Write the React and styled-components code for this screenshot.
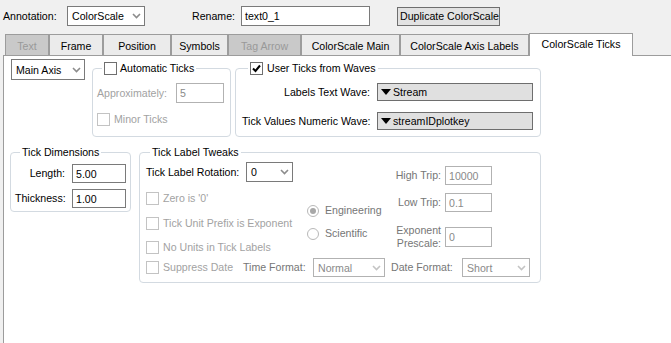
import React from "react";
import styled, { createGlobalStyle } from "styled-components";

const GlobalStyle = createGlobalStyle`
  html, body {
    margin: 0;
    padding: 0;
    background: #f0f0f0;
  }
  body {
    font-family: "Liberation Sans", Arial, sans-serif;
    font-size: 10.6px;
    color: #000;
  }
  * {
    box-sizing: border-box;
  }
`;

const Window = styled.div`
  width: 671px;
  height: 343px;
  display: flex;
  flex-direction: column;
  overflow: hidden;
  background: #f0f0f0;
`;

const TopBar = styled.div`
  display: flex;
  align-items: center;
  height: 20px;
  margin: 6px 0 0 3px;
`;

const Label = styled.span`
  display: inline-block;
  flex: none;
  width: ${(p) => (p.$w ? `${p.$w}px` : "auto")};
  margin-left: ${(p) => p.$ml || 0}px;
  text-align: ${(p) => (p.$right ? "right" : "left")};
  color: ${(p) => (p.$tone === "dim" ? "#a2a2a2" : p.$tone === "mid" ? "#767676" : "#000")};
  line-height: 13px;
  white-space: ${(p) => (p.$wrap ? "normal" : "nowrap")};
`;

const Field = styled.div`
  flex: none;
  width: ${(p) => p.$w}px;
  height: ${(p) => p.$h || 20}px;
  margin-left: ${(p) => p.$ml || 0}px;
  border: 1px solid ${(p) => (p.$off ? "#b2b2b2" : "#7a7a7a")};
  background: #fff;
  color: ${(p) => (p.$off ? "#8a8a8a" : "#000")};
  padding-left: 3px;
  display: flex;
  align-items: center;
`;

const SelectBox = styled(Field)`
  justify-content: space-between;
  padding: 0 3px 0 4px;
`;

const PopupBox = styled.div`
  flex: none;
  width: ${(p) => p.$w}px;
  height: 18px;
  margin-left: ${(p) => p.$ml || 0}px;
  background: #e0e0e0;
  border: 1px solid #6e6e6e;
  display: flex;
  align-items: center;
  gap: 2px;
  padding-left: 3px;
`;

const Button = styled.div`
  width: 103px;
  height: 19px;
  margin-left: 27px;
  background: #e2e2e2;
  border: 1px solid #6e6e6e;
  display: flex;
  align-items: center;
  padding-left: 2px;
  white-space: nowrap;
`;

const TabStrip = styled.div`
  display: flex;
  align-items: flex-end;
  height: 22px;
  margin-top: 7px;
  padding-left: 5px;
`;

const Tab = styled.div`
  flex: none;
  width: ${(p) => p.$w}px;
  height: ${(p) => (p.$active ? 23 : 21)}px;
  margin-bottom: ${(p) => (p.$active ? -1 : 0)}px;
  position: relative;
  z-index: ${(p) => (p.$active ? 1 : 0)};
  border: 1px solid #9c9c9c;
  border-bottom: none;
  background: ${(p) => (p.$active ? "#fff" : p.$off ? "#c9c9c9" : "#ebebeb")};
  color: ${(p) => (p.$off ? "#999" : "#000")};
  display: flex;
  align-items: center;
  justify-content: center;
  white-space: nowrap;
  padding-top: ${(p) => (p.$active ? 0 : 1)}px;
  padding-bottom: ${(p) => (p.$active ? 3 : 0)}px;
`;

const Panel = styled.div`
  flex: 1;
  margin-left: 3px;
  background: #fff;
  border-top: 1px solid #9c9c9c;
  border-left: 1px solid #9c9c9c;
  padding: 3px 0 0 7px;
`;

const Row = styled.div`
  display: flex;
  align-items: flex-start;
  margin-top: ${(p) => p.$mt || 0}px;
  margin-left: ${(p) => p.$ml || 0}px;
`;

const Group = styled.fieldset`
  flex: none;
  width: ${(p) => p.$w}px;
  margin: ${(p) => p.$mt || 0}px 0 0 ${(p) => p.$ml || 0}px;
  padding: ${(p) => p.$pad};
  border: 1px solid #d3dae1;
  border-radius: 4px;
  min-width: 0;
`;

const Legend = styled.legend`
  margin-left: ${(p) => p.$ml}px;
  padding: 0 2px;
  line-height: 13px;
  height: 13px;
`;

const LegendInner = styled.span`
  display: inline-flex;
  align-items: center;
  gap: ${(p) => p.$gap || 3}px;
`;

const Line = styled.div`
  display: flex;
  align-items: ${(p) => (p.$top ? "flex-start" : "center")};
  margin-top: ${(p) => p.$mt || 0}px;
`;

const Col = styled.div`
  flex: none;
  width: ${(p) => (p.$w ? `${p.$w}px` : "auto")};
  display: flex;
  flex-direction: column;
`;

const CheckItem = styled.div`
  flex: none;
  display: flex;
  align-items: center;
  gap: ${(p) => p.$gap || 4}px;
  width: ${(p) => (p.$w ? `${p.$w}px` : "auto")};
  height: 13px;
  margin-top: ${(p) => p.$mt || 0}px;
`;

const Box = styled.span`
  flex: none;
  width: 13px;
  height: 13px;
  border: 1px solid ${(p) => (p.$off ? "#c3c3c3" : "#6f6f6f")};
  background: #fff;
  display: flex;
  align-items: center;
  justify-content: center;
`;

const RadioDot = styled.span`
  flex: none;
  width: 12px;
  height: 12px;
  border-radius: 50%;
  border: 1px solid #b8b8b8;
  background: #fff;
  display: flex;
  align-items: center;
  justify-content: center;
  &::after {
    content: "";
    display: ${(p) => (p.$on ? "block" : "none")};
    width: 6px;
    height: 6px;
    border-radius: 50%;
    background: #a8a8a8;
  }
`;

const RadioItem = styled.div`
  display: flex;
  align-items: center;
  gap: 6px;
  height: 13px;
  margin-top: ${(p) => p.$mt || 0}px;
`;

function Chevron({ off }) {
  return (
    <svg width="9" height="6" viewBox="0 0 9 6">
      <polyline
        points="1,1 4.5,4.5 8,1"
        fill="none"
        stroke={off ? "#c4c4c4" : "#8c8c8c"}
        strokeWidth="1.6"
      />
    </svg>
  );
}

function Select({ w, h, ml, off, children }) {
  return (
    <SelectBox $w={w} $h={h} $ml={ml} $off={off}>
      <span>{children}</span>
      <Chevron off={off} />
    </SelectBox>
  );
}

function Popup({ w, ml, children }) {
  return (
    <PopupBox $w={w} $ml={ml}>
      <svg width="10" height="6" viewBox="0 0 10 6">
        <polygon points="0,0 10,0 5,6" fill="#000" />
      </svg>
      <span>{children}</span>
    </PopupBox>
  );
}

function Check({ on, off }) {
  return (
    <Box $off={off}>
      {on && (
        <svg width="9" height="9" viewBox="0 0 9 9">
          <polyline points="1,4.5 3.5,7 8,1.5" fill="none" stroke="#000" strokeWidth="2" />
        </svg>
      )}
    </Box>
  );
}

function CheckLabel({ children, off, on, w, mt }) {
  return (
    <CheckItem $w={w} $mt={mt}>
      <Check on={on} off={off} />
      <Label $tone={off ? "dim" : undefined}>{children}</Label>
    </CheckItem>
  );
}

const tabs = [
  { name: "Text", w: 44, off: true },
  { name: "Frame", w: 54 },
  { name: "Position", w: 68 },
  { name: "Symbols", w: 57 },
  { name: "Tag Arrow", w: 73, off: true },
  { name: "ColorScale Main", w: 99 },
  { name: "ColorScale Axis Labels", w: 129 },
  { name: "ColorScale Ticks", w: 104, active: true },
];

export default function App() {
  return (
    <Window>
      <GlobalStyle />
      <TopBar>
        <Label $w={64}>Annotation:</Label>
        <Select w={78} h={20}>ColorScale</Select>
        <Label $w={49} $ml={47}>Rename:</Label>
        <Field $w={129} $h={20}>text0_1</Field>
        <Button>Duplicate ColorScale</Button>
      </TopBar>

      <TabStrip>
        {tabs.map((t) => (
          <Tab key={t.name} $w={t.w} $off={t.off} $active={t.active}>
            {t.name}
          </Tab>
        ))}
      </TabStrip>

      <Panel>
        <Row>
          <Select w={74} h={21}>Main Axis</Select>

          <Group $w={139} $ml={7} $mt={3} $pad="8px 0 10px 4px">
            <Legend $ml={5}>
              <LegendInner $gap={3}>
                <Check />
                <span>Automatic Ticks</span>
              </LegendInner>
            </Legend>
            <Line>
              <Label $w={79} $tone="dim">Approximately:</Label>
              <Field $w={48} $h={20} $off>5</Field>
            </Line>
            <CheckLabel off mt={10}>Minor Ticks</CheckLabel>
          </Group>

          <Group $w={306} $ml={4} $mt={3} $pad="8px 0 6px 6px">
            <Legend $ml={6}>
              <LegendInner $gap={4}>
                <Check on />
                <span>User Ticks from Waves</span>
              </LegendInner>
            </Legend>
            <Line>
              <Label $w={128} $right>Labels Text Wave:</Label>
              <Popup w={156} ml={7}>Stream</Popup>
            </Line>
            <Line $mt={11}>
              <Label $w={128} $right>Tick Values Numeric Wave:</Label>
              <Popup w={156} ml={7}>streamIDplotkey</Popup>
            </Line>
          </Group>
        </Row>

        <Row $mt={9} $ml={-1}>
          <Group $w={121} $pad="5px 0 3px 4px">
            <Legend $ml={5}>Tick Dimensions</Legend>
            <Line>
              <Label $w={50} $right>Length:</Label>
              <Field $w={54} $h={19} $ml={7}>5.00</Field>
            </Line>
            <Line $mt={6}>
              <Label $w={50} $right>Thickness:</Label>
              <Field $w={54} $h={19} $ml={7}>1.00</Field>
            </Line>
          </Group>

          <Group $w={402} $ml={8} $pad="3px 0 5px 6px">
            <Legend $ml={4}>Tick Label Tweaks</Legend>
            <Line $top>
              <Col $w={161}>
                <Line>
                  <Label $w={100}>Tick Label Rotation:</Label>
                  <Select w={47} h={20}>0</Select>
                </Line>
                <CheckLabel off mt={10}>Zero is '0'</CheckLabel>
                <CheckLabel off mt={12}>Tick Unit Prefix is Exponent</CheckLabel>
                <CheckLabel off mt={11}>No Units in Tick Labels</CheckLabel>
              </Col>
              <Col $w={80}>
                <RadioItem $mt={42}>
                  <RadioDot $on />
                  <Label $tone="mid">Engineering</Label>
                </RadioItem>
                <RadioItem $mt={10}>
                  <RadioDot />
                  <Label $tone="mid">Scientific</Label>
                </RadioItem>
              </Col>
              <Col>
                <Line $mt={4}>
                  <Label $w={54} $right $tone="mid">High Trip:</Label>
                  <Field $w={47} $h={19} $ml={4} $off>10000</Field>
                </Line>
                <Line $mt={8}>
                  <Label $w={54} $right $tone="mid">Low Trip:</Label>
                  <Field $w={47} $h={19} $ml={4} $off>0.1</Field>
                </Line>
                <Line $mt={12}>
                  <Label $w={54} $right $wrap $tone="mid">
                    Exponent
                    <br />
                    Prescale:
                  </Label>
                  <Field $w={47} $h={20} $ml={4} $off>0</Field>
                </Line>
              </Col>
            </Line>
            <Line $mt={4}>
              <CheckLabel off w={97}>Suppress Date</CheckLabel>
              <Label $w={70} $tone="mid">Time Format:</Label>
              <Select w={72} h={19} off>Normal</Select>
              <Label $w={71} $ml={6} $tone="mid">Date Format:</Label>
              <Select w={68} h={19} off>Short</Select>
            </Line>
          </Group>
        </Row>
      </Panel>
    </Window>
  );
}
